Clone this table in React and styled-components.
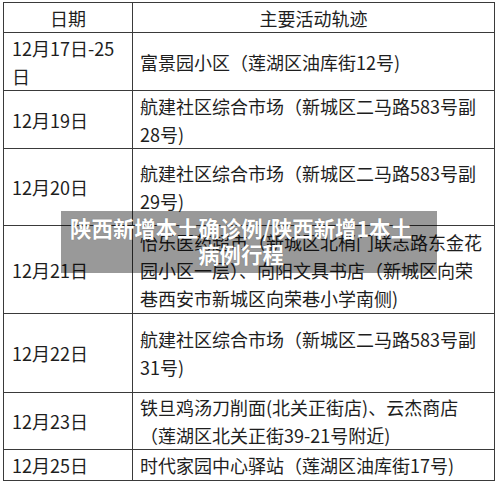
import styled, { createGlobalStyle } from 'styled-components';

const rows = [
  { date: ['12月17日-25', '日'], text: ['富景园小区（莲湖区油库街12号)'], h: 58 },
  { date: ['12月19日'], text: ['航建社区综合市场（新城区二马路583号副', '28号)'], h: 58 },
  { date: ['12月20日'], text: ['航建社区综合市场（新城区二马路583号副', '29号)'], h: 77 },
  {
    date: ['12月21日'],
    text: [
      '怡乐医药超市（新城区北梢门联志路东金花',
      '园小区一层）、向阳文具书店（新城区向荣',
      '巷西安市新城区向荣巷小学南侧)',
    ],
    h: 88,
  },
  { date: ['12月22日'], text: ['航建社区综合市场（新城区二马路583号副', '31号)'], h: 79 },
  { date: ['12月23日'], text: ['铁旦鸡汤刀削面(北关正街店)、云杰商店', '（莲湖区北关正街39-21号附近)'], h: 57 },
  { date: ['12月25日'], text: ['时代家园中心驿站（莲湖区油库街17号)'], h: 31 },
];

const App = () => {
  return (
    <>
      <GlobalStyle />
      <Page>
        <Table>
          <Row $h={30}>
            <DateCell $head>日期</DateCell>
            <InfoCell $head>主要活动轨迹</InfoCell>
          </Row>
          {rows.map((r, i) => (
            <Row key={i} $h={r.h}>
              <DateCell>
                {r.date.map((l) => (
                  <Line key={l}>{l}</Line>
                ))}
              </DateCell>
              <InfoCell>
                {r.text.map((l) => (
                  <Line key={l}>{l}</Line>
                ))}
              </InfoCell>
            </Row>
          ))}
          <Banner>
            陕西新增本土确诊例/陕西新增1本土
            <br />
            病例行程
          </Banner>
        </Table>
      </Page>
    </>
  );
};

export default App;

const GlobalStyle = createGlobalStyle`
  html, body {
    margin: 0;
    padding: 0;
    background: #fff;
  }
  body {
    font-family: "Noto Sans CJK SC", "Noto Sans", sans-serif;
    color: #1e1e1e;
  }
`;

const Page = styled.div`
  width: 500px;
  height: 486px;
  padding: 2px 5px 0 3px;
  box-sizing: border-box;
`;

const Table = styled.div`
  position: relative;
  border: 1px solid #3a3a3a;
  border-bottom: none;
  display: flex;
  flex-direction: column;
`;

const Row = styled.div`
  display: grid;
  grid-template-columns: 129px 1fr;
  height: ${(p) => p.$h}px;
  box-sizing: border-box;
  border-bottom: 1px solid #3a3a3a;
`;

const Cell = styled.div`
  display: flex;
  flex-direction: column;
  justify-content: center;
  align-items: ${(p) => (p.$head ? 'center' : 'flex-start')};
  padding-left: ${(p) => (p.$head ? '0' : '8px')};
  font-size: 18px;
  line-height: 28px;
  white-space: nowrap;
  overflow: hidden;
`;

const DateCell = styled(Cell)`
  border-right: 1px solid #3a3a3a;
`;

const InfoCell = styled(Cell)`
  padding-left: ${(p) => (p.$head ? '0' : '7px')};
`;

const Line = styled.span`
  display: block;
`;

const Banner = styled.div`
  position: absolute;
  left: 57px;
  top: 208px;
  width: 376px;
  height: 62px;
  box-sizing: border-box;
  padding: 4px 16px 0 0;
  background: rgba(0, 0, 0, 0.4);
  color: #fff;
  font-family: "Noto Sans CJK SC", sans-serif;
  font-weight: 700;
  font-size: 21.4px;
  line-height: 26px;
  white-space: nowrap;
  text-align: center;
  text-shadow: 0 0 1px rgba(0, 0, 0, 0.3);
`;
